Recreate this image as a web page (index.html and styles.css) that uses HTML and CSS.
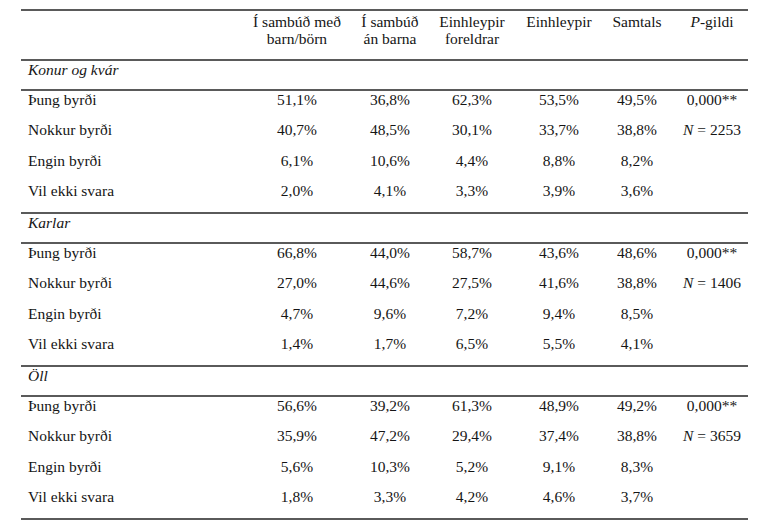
FILE: index.html
```html
<!DOCTYPE html>
<html lang="is">
<head>
<meta charset="utf-8">
<title>Byrði</title>
<link rel="stylesheet" href="styles.css">
</head>
<body>
<table class="tbl">
  <colgroup>
    <col class="c-label"><col class="c1"><col class="c2"><col class="c3"><col class="c4"><col class="c5"><col class="c6">
  </colgroup>
  <thead>
    <tr class="head">
      <th></th>
      <th>Í sambúð með<br>barn/börn</th>
      <th>Í sambúð<br>án barna</th>
      <th>Einhleypir<br>foreldrar</th>
      <th>Einhleypir</th>
      <th>Samtals</th>
      <th class="last"><i>P</i>-gildi</th>
    </tr>
  </thead>
  <tbody>
    <tr class="cat"><td colspan="7"><i>Konur og kvár</i></td></tr>
    <tr class="row"><td>Þung byrði</td><td>51,1%</td><td>36,8%</td><td>62,3%</td><td>53,5%</td><td>49,5%</td><td class="last">0,000**</td></tr>
    <tr class="row"><td>Nokkur byrði</td><td>40,7%</td><td>48,5%</td><td>30,1%</td><td>33,7%</td><td>38,8%</td><td class="last"><i>N</i> = 2253</td></tr>
    <tr class="row"><td>Engin byrði</td><td>6,1%</td><td>10,6%</td><td>4,4%</td><td>8,8%</td><td>8,2%</td><td class="last"></td></tr>
    <tr class="row end"><td>Vil ekki svara</td><td>2,0%</td><td>4,1%</td><td>3,3%</td><td>3,9%</td><td>3,6%</td><td class="last"></td></tr>

    <tr class="cat"><td colspan="7"><i>Karlar</i></td></tr>
    <tr class="row"><td>Þung byrði</td><td>66,8%</td><td>44,0%</td><td>58,7%</td><td>43,6%</td><td>48,6%</td><td class="last">0,000**</td></tr>
    <tr class="row"><td>Nokkur byrði</td><td>27,0%</td><td>44,6%</td><td>27,5%</td><td>41,6%</td><td>38,8%</td><td class="last"><i>N</i> = 1406</td></tr>
    <tr class="row"><td>Engin byrði</td><td>4,7%</td><td>9,6%</td><td>7,2%</td><td>9,4%</td><td>8,5%</td><td class="last"></td></tr>
    <tr class="row end"><td>Vil ekki svara</td><td>1,4%</td><td>1,7%</td><td>6,5%</td><td>5,5%</td><td>4,1%</td><td class="last"></td></tr>

    <tr class="cat"><td colspan="7"><i>Öll</i></td></tr>
    <tr class="row"><td>Þung byrði</td><td>56,6%</td><td>39,2%</td><td>61,3%</td><td>48,9%</td><td>49,2%</td><td class="last">0,000**</td></tr>
    <tr class="row"><td>Nokkur byrði</td><td>35,9%</td><td>47,2%</td><td>29,4%</td><td>37,4%</td><td>38,8%</td><td class="last"><i>N</i> = 3659</td></tr>
    <tr class="row"><td>Engin byrði</td><td>5,6%</td><td>10,3%</td><td>5,2%</td><td>9,1%</td><td>8,3%</td><td class="last"></td></tr>
    <tr class="row end"><td>Vil ekki svara</td><td>1,8%</td><td>3,3%</td><td>4,2%</td><td>4,6%</td><td>3,7%</td><td class="last"></td></tr>
  </tbody>
</table>
</body>
</html>
```
FILE: styles.css
```css
html, body {
  margin: 0;
  padding: 0;
  background: #ffffff;
}

body {
  font-family: "Liberation Serif", "Tinos", "Times New Roman", "DejaVu Serif", serif;
  font-size: 15.5px;
  color: #151515;
}

.tbl {
  margin: 9px 0 0 21px;
  width: 727px;
  table-layout: fixed;
  border-collapse: collapse;
  border-spacing: 0;
  font-family: inherit;
}

.c-label { width: 230px; }
.c1 { width: 92px; }
.c2 { width: 94px; }
.c3 { width: 70px; }
.c4 { width: 104px; }
.c5 { width: 52px; }
.c6 { width: 85px; }

.tbl th,
.tbl td {
  padding: 0;
  line-height: 17px;
  text-align: center;
  vertical-align: top;
  white-space: nowrap;
  font-weight: normal;
  font-family: "Liberation Serif", "Tinos", "Times New Roman", "DejaVu Serif", serif;
}

.tbl th.last,
.tbl td.last {
  padding-left: 13px;
}

.head th {
  padding-top: 2px;
  padding-bottom: 12px;
  border-top: 2px solid #5a5a5a;
  border-bottom: 2px solid #5a5a5a;
}

.cat td {
  text-align: left;
  padding: 0 0 11px 7px;
  border-bottom: 2px solid #5a5a5a;
}

.row td {
  padding-bottom: 13.25px;
}

.row td:first-child {
  text-align: left;
  padding-left: 7px;
}

.row.end td {
  border-bottom: 2px solid #5a5a5a;
}
```
